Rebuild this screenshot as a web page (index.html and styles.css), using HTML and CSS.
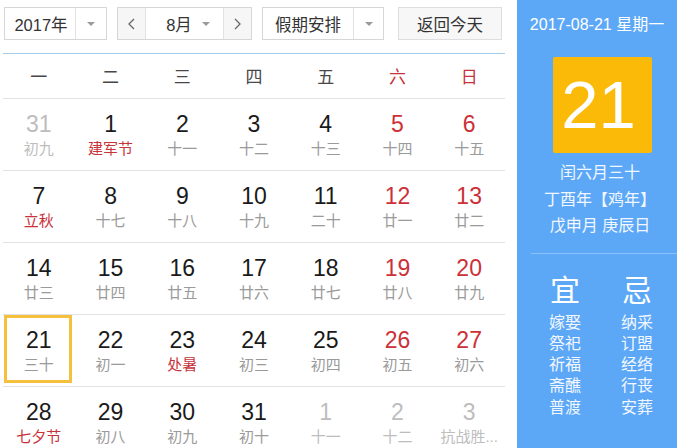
FILE: index.html
```html
<!DOCTYPE html>
<html lang="zh-CN">
<head>
<meta charset="utf-8">
<title>万年历</title>
<link rel="stylesheet" href="styles.css">
</head>
<body>
<div class="app">
  <div class="main">
    <div class="toolbar">
      <div class="select year">
        <span class="select-text">2017年</span>
        <span class="select-arrow"><i class="tri"></i></span>
      </div>
      <div class="month-group">
        <span class="nav-btn"><svg width="9" height="12" viewBox="0 0 9 12"><polyline points="7,1 2,6 7,11" fill="none" stroke="#666" stroke-width="1.3"/></svg></span>
        <span class="month-sel"><span class="select-text">8月</span><i class="tri"></i></span>
        <span class="nav-btn"><svg width="9" height="12" viewBox="0 0 9 12"><polyline points="2,1 7,6 2,11" fill="none" stroke="#666" stroke-width="1.3"/></svg></span>
      </div>
      <div class="select holiday">
        <span class="select-text">假期安排</span>
        <span class="select-arrow"><i class="tri"></i></span>
      </div>
      <div class="today-btn">返回今天</div>
    </div>

    <div class="calendar">
      <div class="week-head">
        <span>一</span><span>二</span><span>三</span><span>四</span><span>五</span><span class="wk">六</span><span class="wk">日</span>
      </div>
      <div class="week">
        <div class="day other"><b>31</b><s>初九</s></div>
        <div class="day"><b>1</b><s class="fest">建军节</s></div>
        <div class="day"><b>2</b><s>十一</s></div>
        <div class="day"><b>3</b><s>十二</s></div>
        <div class="day"><b>4</b><s>十三</s></div>
        <div class="day wk"><b>5</b><s>十四</s></div>
        <div class="day wk"><b>6</b><s>十五</s></div>
      </div>
      <div class="week">
        <div class="day"><b>7</b><s class="fest">立秋</s></div>
        <div class="day"><b>8</b><s>十七</s></div>
        <div class="day"><b>9</b><s>十八</s></div>
        <div class="day"><b>10</b><s>十九</s></div>
        <div class="day"><b>11</b><s>二十</s></div>
        <div class="day wk"><b>12</b><s>廿一</s></div>
        <div class="day wk"><b>13</b><s>廿二</s></div>
      </div>
      <div class="week">
        <div class="day"><b>14</b><s>廿三</s></div>
        <div class="day"><b>15</b><s>廿四</s></div>
        <div class="day"><b>16</b><s>廿五</s></div>
        <div class="day"><b>17</b><s>廿六</s></div>
        <div class="day"><b>18</b><s>廿七</s></div>
        <div class="day wk"><b>19</b><s>廿八</s></div>
        <div class="day wk"><b>20</b><s>廿九</s></div>
      </div>
      <div class="week">
        <div class="day today"><b>21</b><s>三十</s></div>
        <div class="day"><b>22</b><s>初一</s></div>
        <div class="day"><b>23</b><s class="fest">处暑</s></div>
        <div class="day"><b>24</b><s>初三</s></div>
        <div class="day"><b>25</b><s>初四</s></div>
        <div class="day wk"><b>26</b><s>初五</s></div>
        <div class="day wk"><b>27</b><s>初六</s></div>
      </div>
      <div class="week">
        <div class="day"><b>28</b><s class="fest">七夕节</s></div>
        <div class="day"><b>29</b><s>初八</s></div>
        <div class="day"><b>30</b><s>初九</s></div>
        <div class="day"><b>31</b><s>初十</s></div>
        <div class="day other"><b>1</b><s>十一</s></div>
        <div class="day other"><b>2</b><s>十二</s></div>
        <div class="day other"><b>3</b><s>抗战胜...</s></div>
      </div>
    </div>
  </div>

  <aside class="panel">
    <div class="panel-date">2017-08-21 星期一</div>
    <div class="big-day">21</div>
    <div class="lunar">
      <div>闰六月三十</div>
      <div>丁酉年【鸡年】</div>
      <div>戊申月 庚辰日</div>
    </div>
    <div class="panel-line"></div>
    <div class="yiji">
      <div class="yj-col">
        <div class="yj-title">宜</div>
        <div>嫁娶</div><div>祭祀</div><div>祈福</div><div>斋醮</div><div>普渡</div>
      </div>
      <div class="yj-col">
        <div class="yj-title">忌</div>
        <div>纳采</div><div>订盟</div><div>经络</div><div>行丧</div><div>安葬</div>
      </div>
    </div>
  </aside>
</div>
</body>
</html>
```

FILE: styles.css
```css
* { box-sizing: border-box; }
html, body { margin: 0; padding: 0; background: #fff; }
body {
  font-family: "Liberation Sans", "Noto Sans CJK SC", sans-serif;
  color: #333;
  width: 677px;
  height: 448px;
  overflow: hidden;
}
.app { display: flex; height: 448px; }
.main { width: 517px; flex: none; }

/* toolbar */
.toolbar {
  display: flex;
  margin: 7px 0 0 4px;
  height: 33px;
}
.select, .month-group, .today-btn {
  height: 33px;
  border: 1px solid #d6d6d6;
  display: flex;
  align-items: center;
  font-size: 16.5px;
  color: #333;
  background: #fff;
}
.year { width: 103px; }
.holiday { width: 122px; margin-left: 10px; }
.select-text { flex: 1; text-align: center; }
.year .select-text { padding-left: 2px; }
.select-arrow {
  width: 31px;
  height: 100%;
  border-left: 1px solid #e2e2e2;
  display: flex;
  align-items: center;
  justify-content: center;
}
.holiday .select-arrow { width: 30px; }
.tri {
  display: block;
  width: 0; height: 0;
  border-left: 4px solid transparent;
  border-right: 4px solid transparent;
  border-top: 4px solid #9a9a9a;
}
.month-group { width: 135px; margin-left: 10px; }
.nav-btn {
  width: 28px;
  height: 100%;
  display: flex;
  align-items: center;
  justify-content: center;
  background: #f6f6f6;
}
.nav-btn svg { display: block; }
.nav-btn:first-child { border-right: 1px solid #e2e2e2; }
.nav-btn:last-child { border-left: 1px solid #e2e2e2; }
.month-sel {
  flex: 1;
  height: 100%;
  display: flex;
  align-items: center;
  padding: 0 13px 0 10px;
}
.month-sel .select-text { text-align: center; }
.today-btn {
  width: 104px;
  margin-left: 14px;
  justify-content: center;
  background: #f7f7f7;
  border-color: #dedede;
}

/* calendar */
.calendar {
  margin: 13px 0 0 3px;
  width: 502px;
}
.week-head {
  display: grid;
  grid-template-columns: repeat(7, 1fr);
  border-top: 1px solid #a8cceb;
  height: 45px;
  align-items: center;
  font-size: 17px;
  color: #484848;
  text-align: center;
  padding-bottom: 2px;
}
.week-head .wk { color: #c8333b; }
.week {
  display: grid;
  grid-template-columns: repeat(7, 1fr);
  border-top: 1px solid #e2e2e2;
  height: 72px;
}
.day {
  position: relative;
  text-align: center;
  padding-top: 11px;
  min-width: 0;
}
.day b {
  display: block;
  font-weight: normal;
  font-size: 23px;
  line-height: 28px;
  color: #1a1a1a;
}
.day s {
  display: block;
  text-decoration: none;
  font-size: 15px;
  line-height: 22px;
  color: #9a9a9a;
  white-space: nowrap;
}
.day.wk b { color: #cc3038; }
.day s.fest { color: #c8333b; }
.day.other b, .day.other s { color: #bdbdbd; }
.day.today::after {
  content: "";
  position: absolute;
  top: 0; left: 1px; right: 3px; bottom: 3px;
  border: 3px solid #f5c03e;
}

/* right panel */
.panel {
  flex: 1;
  background: #5ca8f7;
  color: #fff;
  padding-left: 6px;
}
.panel-date {
  font-size: 16px;
  text-align: center;
  margin-top: 15px;
  line-height: 20px;
  padding-right: 6px;
}
.big-day {
  width: 99px;
  height: 96px;
  margin: 22px 0 0 30px;
  background: #fbb908;
  border-radius: 2px;
  font-size: 67px;
  line-height: 96px;
  text-align: center;
  padding-right: 8px;
  color: #fff;
}
.lunar {
  margin-top: 7px;
  text-align: center;
  font-size: 16px;
  line-height: 26.5px;
  color: #f2f7ff;
}
.panel-line {
  height: 1px;
  background: #8cc2f9;
  margin: 13px 0 0 8px;
}
.yiji {
  display: grid;
  grid-template-columns: 72px 72px;
  margin: 20px 0 0 6px;
  font-size: 16px;
  line-height: 21.3px;
  text-align: center;
  color: #f2f7ff;
}
.yj-title {
  font-size: 30px;
  line-height: 34px;
  margin-bottom: 4px;
  color: #fff;
}
```
